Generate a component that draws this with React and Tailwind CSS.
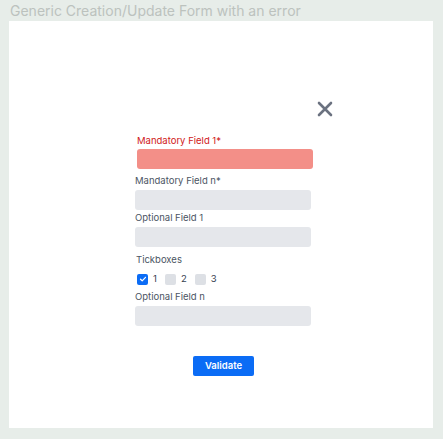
import React from "react";

function Label({ children, className = "" }) {
  return (
    <div className={"text-[9.5px] leading-[12px] text-[#4b5563] " + className}>{children}</div>
  );
}

function Input({ className = "" }) {
  return <div className={"h-[20px] w-[176px] rounded-[3px] bg-[#e5e7eb] " + className} />;
}

function Box({ checked, n }) {
  return (
    <div className="flex items-center">
      {checked ? (
        <div className="flex h-[11px] w-[11px] items-center justify-center rounded-[2px] bg-[#0b6cf5]">
          <svg width="8" height="8" viewBox="0 0 8 8">
            <path d="M1.5 4.2 L3.2 5.8 L6.5 2.3" stroke="white" strokeWidth="1.2" fill="none" strokeLinecap="round" strokeLinejoin="round" />
          </svg>
        </div>
      ) : (
        <div className="h-[11px] w-[11px] rounded-[2px] bg-[#dde0e5]" />
      )}
      <span className="ml-[5px] text-[9.5px] leading-[12px] text-[#374151]">{n}</span>
    </div>
  );
}

export default function App() {
  return (
    <div
      className="h-[439px] w-[443px] bg-[#e7ede9]"
      style={{ fontFamily: "Inter, 'Noto Sans', sans-serif" }}
    >
      <div className="h-[21px] pl-[10px] text-[14px] leading-[21px] text-[#bcc2be]">
        Generic Creation/Update Form with an error
      </div>
      <div className="ml-[9px] h-[407px] w-[424px] bg-white pt-[80px]">
        <div className="ml-[126px] w-[198px]">
          <div className="flex justify-end">
            <svg width="16" height="16" viewBox="0 0 16 16">
              <path d="M2 2 L14 14 M14 2 L2 14" stroke="#6b7280" strokeWidth="2.6" strokeLinecap="round" />
            </svg>
          </div>
          <div className="ml-[2px] mt-[18px] text-[9.5px] leading-[12px] text-[#d01818]">Mandatory Field 1*</div>
          <div className="ml-[2px] mt-[2px] h-[20px] w-[176px] rounded-[3px] bg-[#f38f88]" />
          <Label className="mt-[6px]">Mandatory Field n*</Label>
          <Input className="mt-[3px]" />
          <Label className="mt-[2px]">Optional Field 1</Label>
          <Input className="mt-[3px]" />
          <Label className="ml-[1px] mt-[7px]">Tickboxes</Label>
          <div className="ml-[2px] mt-[7px] flex gap-[8px]">
            <Box checked n="1" />
            <Box n="2" />
            <Box n="3" />
          </div>
          <Label className="mt-[6px]">Optional Field n</Label>
          <Input className="mt-[3px]" />
          <div className="mt-[30px] flex w-[176px] justify-center">
            <button className="ml-[1px] h-[20px] w-[61px] rounded-[2px] bg-[#0b6cf5] text-[9.5px] font-semibold text-white">
              Validate
            </button>
          </div>
        </div>
      </div>
    </div>
  );
}
